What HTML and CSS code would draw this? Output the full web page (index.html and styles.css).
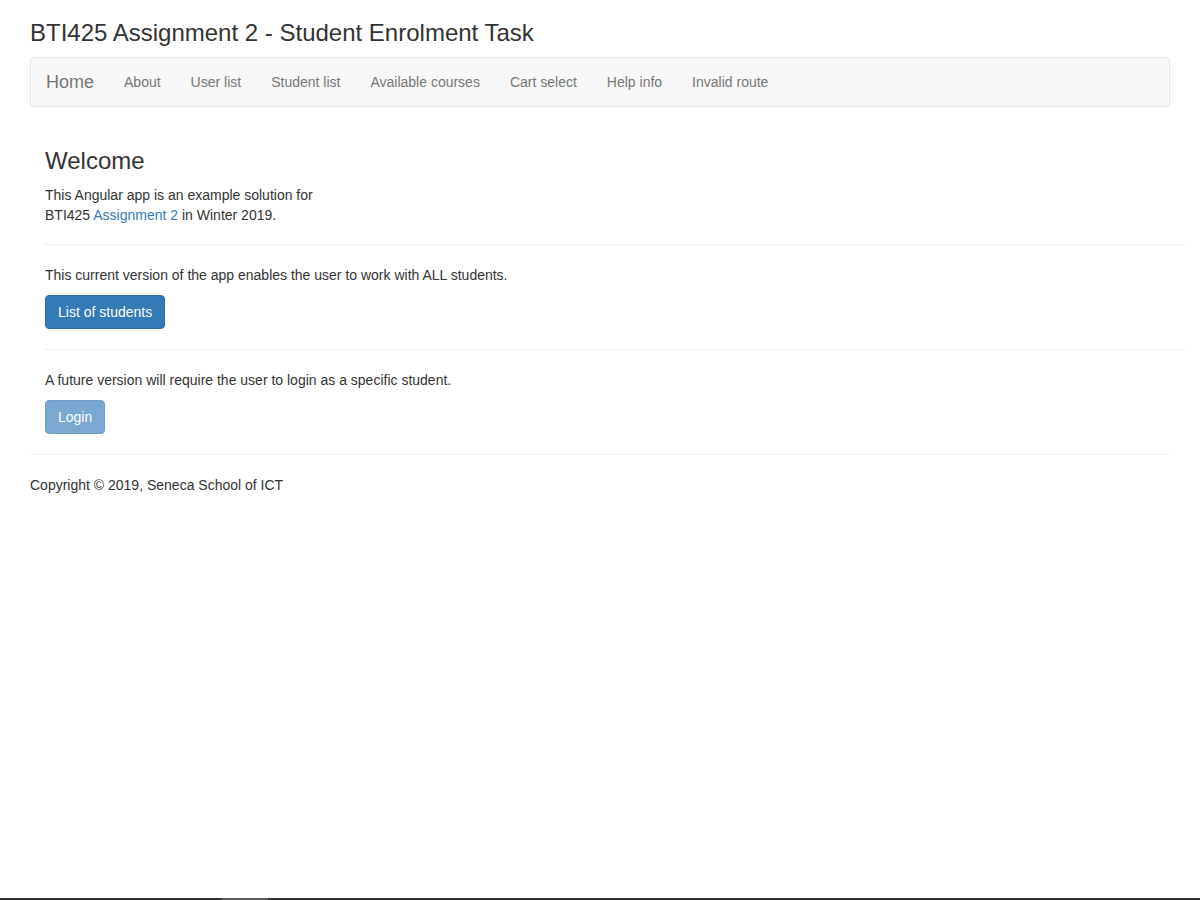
FILE: index.html
```html
<!DOCTYPE html>
<html lang="en">
<head>
<meta charset="utf-8">
<title>BTI425 Assignment 2</title>
<link rel="stylesheet" href="styles.css">
</head>
<body>
<div class="page">
  <h1 class="title">BTI425 Assignment 2 - Student Enrolment Task</h1>
  <nav class="navbar">
    <a class="brand" href="#">Home</a>
    <ul class="nav">
      <li><a href="#">About</a></li>
      <li><a href="#">User list</a></li>
      <li><a href="#">Student list</a></li>
      <li><a href="#">Available courses</a></li>
      <li><a href="#">Cart select</a></li>
      <li><a href="#">Help info</a></li>
      <li><a href="#">Invalid route</a></li>
    </ul>
  </nav>
  <main class="main">
    <h2 class="heading">Welcome</h2>
    <p class="text">This Angular app is an example solution for<br>BTI425 <a class="link" href="#">Assignment 2</a> in Winter 2019.</p>
    <hr class="rule rule-first">
    <p class="text">This current version of the app enables the user to work with ALL students.</p>
    <div class="actions"><a class="btn" href="#">List of students</a></div>
    <hr class="rule">
    <p class="text">A future version will require the user to login as a specific student.</p>
    <div class="actions"><span class="btn btn-disabled">Login</span></div>
  </main>
  <hr class="rule footer-rule">
  <footer class="footer">Copyright © 2019, Seneca School of ICT</footer>
</div>
<div class="screen-edge"><span class="screen-edge-tab"></span></div>
</body>
</html>
```

FILE: styles.css
```css
* {
  box-sizing: border-box;
}

html, body {
  background: #fff;
}

body {
  margin: 0;
  font-family: "Liberation Sans", Arial, Helvetica, sans-serif;
  font-size: 14px;
  line-height: 20px;
  color: #333;
}

.page {
  width: 1170px;
  margin: 0 auto;
  padding: 0 15px;
}

.title {
  margin: 20px 0 11px;
  font-size: 24px;
  font-weight: 500;
  line-height: 26px;
  color: #333;
}

.navbar {
  display: flex;
  align-items: center;
  height: 50px;
  background: #f8f8f8;
  border: 1px solid #e7e7e7;
  border-radius: 4px;
}

.brand {
  padding: 0 15px;
  font-size: 18px;
  line-height: 20px;
  color: #777;
  text-decoration: none;
}

.nav {
  display: flex;
  margin: 0;
  padding: 0;
  list-style: none;
}

.nav a {
  display: block;
  padding: 0 15px;
  line-height: 20px;
  color: #777;
  text-decoration: none;
}

.main {
  box-sizing: content-box;
  width: 1140px;
  margin-top: 41px;
  padding: 0 15px;
}

.heading {
  margin: 0 0 11px;
  font-size: 24px;
  font-weight: 500;
  line-height: 26px;
  color: #333;
}

.text {
  margin: 0 0 10px;
}

.link {
  color: #337ab7;
  text-decoration: none;
}

.rule {
  height: 0;
  margin: 20px 0;
  border: 0;
  border-top: 1px solid #eee;
}

.rule-first {
  margin-top: 19px;
}

.actions {
  display: flex;
}

.btn {
  display: block;
  height: 34px;
  padding: 6px 12px;
  font-size: 14px;
  line-height: 20px;
  color: #fff;
  text-decoration: none;
  background: #337ab7;
  border: 1px solid #2e6da4;
  border-radius: 4px;
}

.btn-disabled {
  opacity: 0.65;
}

.footer-rule {
  margin-top: 20px;
}

.footer {
  line-height: 20px;
}

.screen-edge {
  position: fixed;
  left: 0;
  right: 0;
  bottom: 0;
  height: 2px;
  background: #333;
}

.screen-edge-tab {
  position: absolute;
  left: 222px;
  top: 0;
  width: 46px;
  height: 2px;
  background: #5c5c5c;
}
```
